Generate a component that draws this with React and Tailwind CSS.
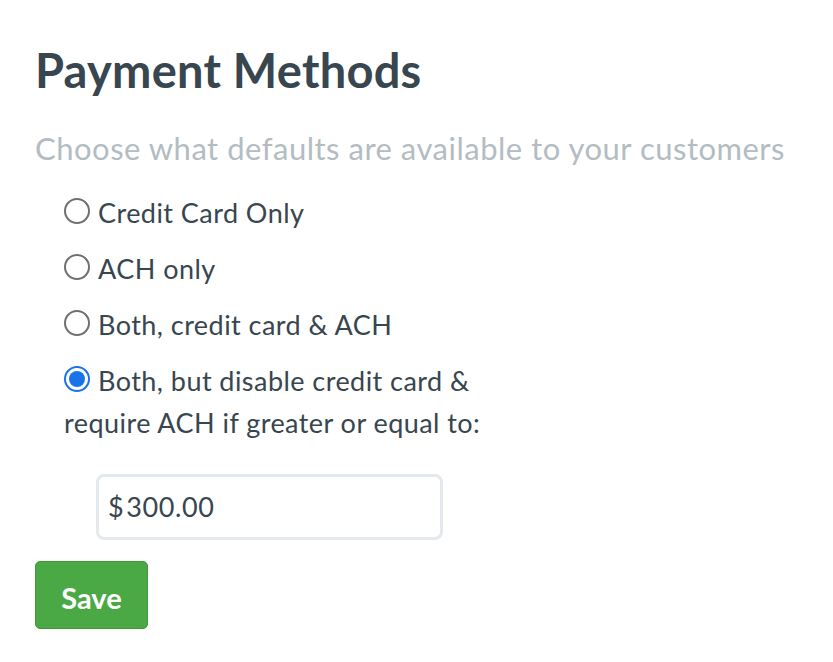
const options = [
  { id: "cc", label: "Credit Card Only" },
  { id: "ach", label: "ACH only" },
  { id: "both", label: "Both, credit card & ACH" },
];

function Radio({ checked }) {
  if (checked) {
    return (
      <span className="mb-[5px] flex h-[26px] w-[26px] shrink-0 items-center justify-center rounded-full border-[2px] border-[#1a73e8] bg-white">
        <span className="h-[16px] w-[16px] rounded-full bg-[#1a73e8]" />
      </span>
    );
  }
  return (
    <span className="mb-[5px] h-[26px] w-[26px] shrink-0 rounded-full border-[2px] border-[#6f6f6f] bg-white" />
  );
}

export default function App() {
  return (
    <div
      className="min-h-screen bg-white px-[35px] pt-[42px] text-[#37464f]"
      style={{ fontFamily: "Lato, 'Open Sans', sans-serif" }}
    >
      <h1 className="text-[47px] font-bold leading-[56px] tracking-[0.25px]">Payment Methods</h1>
      <p className="mt-[31px] text-[31px] leading-[38px] tracking-[0.5px] text-[#b3bcc2]">
        Choose what defaults are available to your customers
      </p>

      <div className="mt-[18px] flex flex-col pl-[29px] text-[27px] tracking-[0.45px]">
        {options.map((o) => (
          <label key={o.id} className="flex h-[56px] items-center gap-[8px] leading-[32px]">
            <Radio checked={false} />
            <span>{o.label}</span>
          </label>
        ))}
        <label className="block pt-[7px] leading-[42px]">
          <span className="flex h-[42px] items-center gap-[8px]">
            <Radio checked />
            <span>Both, but disable credit card &amp;</span>
          </span>
          <span className="block">require ACH if greater or equal to:</span>
        </label>
      </div>

      <div className="mt-[30px] pl-[61px]">
        <div className="flex h-[66px] w-[347px] items-center rounded-[8px] border-[3px] border-[#e4e9ed] bg-white px-[9px] text-[27px] tracking-[0.6px]">
          <span>$</span>
          <span className="ml-[2px]">300.00</span>
        </div>
      </div>

      <button className="mt-[21px] h-[68px] w-[113px] rounded-[5px] border border-[#3f9a35] bg-[#4aa944] pt-[6px] text-[29px] font-bold text-white">
        Save
      </button>
    </div>
  );
}
